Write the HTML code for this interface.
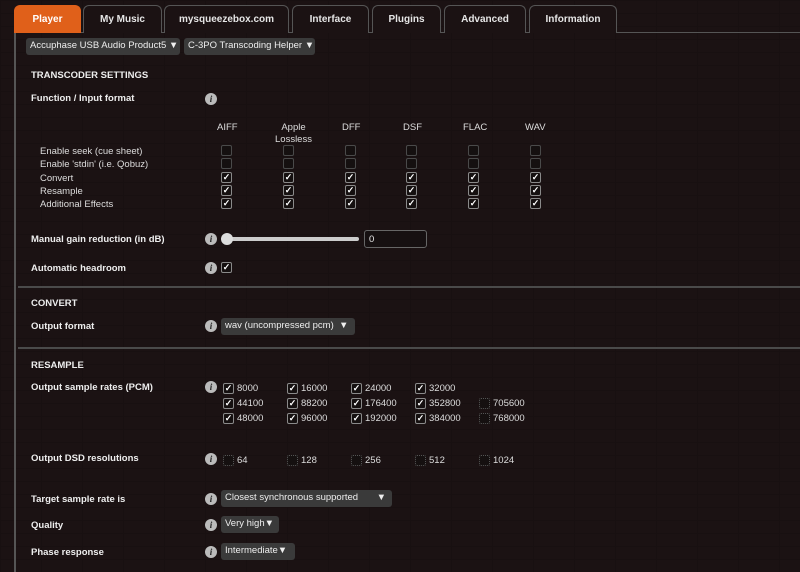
<!DOCTYPE html>
<html><head><meta charset="utf-8"><style>
*{margin:0;padding:0;box-sizing:border-box}
body{width:800px;height:572px;overflow:hidden;background:#1b1213;font-family:"Liberation Sans",sans-serif;color:#e8e8e8;position:relative;
background-image:linear-gradient(#181011 1px,transparent 1px),linear-gradient(90deg,#181011 1px,transparent 1px),linear-gradient(90deg,#181011 1px,transparent 1px);background-size:82px 13px,82px 26px,82px 26px;background-position:0 0,0 0,41px 13px;}
.a{position:absolute;white-space:nowrap}
.tab{position:absolute;top:5px;height:28px;border:1px solid #555;border-bottom:none;border-radius:6px 6px 0 0;background:#1b1213;font-weight:bold;font-size:10px;text-align:center;line-height:27px;color:#e6e6e6}
.b{font-weight:bold;font-size:9.5px;color:#eee}
.t{font-size:9.5px;color:#ddd}
.i{position:absolute;width:12px;height:12px;border-radius:50%;background:#bbb;color:#222;font:bold italic 9px "Liberation Serif",serif;text-align:center;line-height:12px}
.c{position:absolute;width:11px;height:11px;border:1px solid #8a8a8a;border-radius:2px;background:#151010;font-size:9px;line-height:9px;text-align:center;color:#fff;font-weight:bold}
.u{border-color:#4a4a4a}
.d{border:1px dotted #555}
.sel{position:absolute;height:17px;background:#3a3a3a;border-radius:3px;font-size:9.5px;line-height:16px;padding-left:4px;color:#eee}
.hr{position:absolute;left:18px;right:0;height:2px;background:#4a4a4a}
</style></head><body>
<div class="a" style="left:14px;top:32px;width:786px;height:1px;background:#555"></div>
<div class="a" style="left:14px;top:32px;width:2px;height:540px;background:#555"></div>
<div class="tab" style="left:14px;width:67px;background:#e0601a;border-color:#e0601a;color:#fff">Player</div>
<div class="tab" style="left:83px;width:79px">My Music</div>
<div class="tab" style="left:164px;width:125px">mysqueezebox.com</div>
<div class="tab" style="left:292px;width:77px">Interface</div>
<div class="tab" style="left:372px;width:69px">Plugins</div>
<div class="tab" style="left:444px;width:82px">Advanced</div>
<div class="tab" style="left:529px;width:88px">Information</div>

<div class="sel" style="left:26px;top:38px;width:154px">Accuphase USB Audio Product5 ▼</div>
<div class="sel" style="left:184px;top:38px;width:131px">C-3PO Transcoding Helper ▼</div>

<div class="a b" style="left:31px;top:70px">TRANSCODER SETTINGS</div>
<div class="a b" style="left:31px;top:93px">Function / Input format</div>
<div class="i" style="left:205px;top:93px">i</div>

<div class="a t" style="left:217px;top:122px">AIFF</div>
<div class="a t" style="left:275px;top:122px;text-align:center;line-height:12px">Apple<br>Lossless</div>
<div class="a t" style="left:342px;top:122px">DFF</div>
<div class="a t" style="left:403px;top:122px">DSF</div>
<div class="a t" style="left:463px;top:122px">FLAC</div>
<div class="a t" style="left:525px;top:122px">WAV</div>

<div class="a t" style="left:40px;top:145px;line-height:13.3px">Enable seek (cue sheet)<br>Enable 'stdin' (i.e. Qobuz)<br>Convert<br>Resample<br>Additional Effects</div>

<div class="c u" style="left:221px;top:145px"></div><div class="c u" style="left:283px;top:145px"></div><div class="c u" style="left:345px;top:145px"></div><div class="c u" style="left:406px;top:145px"></div><div class="c u" style="left:468px;top:145px"></div><div class="c u" style="left:530px;top:145px"></div>
<div class="c u" style="left:221px;top:158px"></div><div class="c u" style="left:283px;top:158px"></div><div class="c u" style="left:345px;top:158px"></div><div class="c u" style="left:406px;top:158px"></div><div class="c u" style="left:468px;top:158px"></div><div class="c u" style="left:530px;top:158px"></div>
<div class="c" style="left:221px;top:172px">✓</div><div class="c" style="left:283px;top:172px">✓</div><div class="c" style="left:345px;top:172px">✓</div><div class="c" style="left:406px;top:172px">✓</div><div class="c" style="left:468px;top:172px">✓</div><div class="c" style="left:530px;top:172px">✓</div>
<div class="c" style="left:221px;top:185px">✓</div><div class="c" style="left:283px;top:185px">✓</div><div class="c" style="left:345px;top:185px">✓</div><div class="c" style="left:406px;top:185px">✓</div><div class="c" style="left:468px;top:185px">✓</div><div class="c" style="left:530px;top:185px">✓</div>
<div class="c" style="left:221px;top:198px">✓</div><div class="c" style="left:283px;top:198px">✓</div><div class="c" style="left:345px;top:198px">✓</div><div class="c" style="left:406px;top:198px">✓</div><div class="c" style="left:468px;top:198px">✓</div><div class="c" style="left:530px;top:198px">✓</div>

<div class="a b" style="left:31px;top:234px">Manual gain reduction (in dB)</div>
<div class="i" style="left:205px;top:233px">i</div>
<div class="a" style="left:227px;top:237px;width:132px;height:4px;background:#ccc;border-radius:2px"></div>
<div class="a" style="left:221px;top:233px;width:12px;height:12px;border-radius:50%;background:#ddd"></div>
<div class="a" style="left:364px;top:230px;width:63px;height:18px;border:1px solid #666;border-radius:3px;background:#161011;font-size:9.5px;line-height:17px;padding-left:4px">0</div>

<div class="a b" style="left:31px;top:263px">Automatic headroom</div>
<div class="i" style="left:205px;top:262px">i</div>
<div class="c" style="left:221px;top:262px">✓</div>

<div class="hr" style="top:286px"></div>
<div class="a b" style="left:31px;top:298px">CONVERT</div>
<div class="a b" style="left:31px;top:321px">Output format</div>
<div class="i" style="left:205px;top:320px">i</div>
<div class="sel" style="left:221px;top:318px;width:134px">wav (uncompressed pcm) &nbsp;▼</div>

<div class="hr" style="top:347px"></div>
<div class="a b" style="left:31px;top:360px">RESAMPLE</div>
<div class="a b" style="left:31px;top:382px">Output sample rates (PCM)</div>
<div class="i" style="left:205px;top:381px">i</div>

<div class="c" style="left:223px;top:383px">✓</div><div class="a t" style="left:237px;top:383px">8000</div>
<div class="c" style="left:287px;top:383px">✓</div><div class="a t" style="left:301px;top:383px">16000</div>
<div class="c" style="left:351px;top:383px">✓</div><div class="a t" style="left:365px;top:383px">24000</div>
<div class="c" style="left:415px;top:383px">✓</div><div class="a t" style="left:429px;top:383px">32000</div>
<div class="c" style="left:223px;top:398px">✓</div><div class="a t" style="left:237px;top:398px">44100</div>
<div class="c" style="left:287px;top:398px">✓</div><div class="a t" style="left:301px;top:398px">88200</div>
<div class="c" style="left:351px;top:398px">✓</div><div class="a t" style="left:365px;top:398px">176400</div>
<div class="c" style="left:415px;top:398px">✓</div><div class="a t" style="left:429px;top:398px">352800</div>
<div class="c d" style="left:479px;top:398px"></div><div class="a t" style="left:493px;top:398px">705600</div>
<div class="c" style="left:223px;top:413px">✓</div><div class="a t" style="left:237px;top:413px">48000</div>
<div class="c" style="left:287px;top:413px">✓</div><div class="a t" style="left:301px;top:413px">96000</div>
<div class="c" style="left:351px;top:413px">✓</div><div class="a t" style="left:365px;top:413px">192000</div>
<div class="c" style="left:415px;top:413px">✓</div><div class="a t" style="left:429px;top:413px">384000</div>
<div class="c d" style="left:479px;top:413px"></div><div class="a t" style="left:493px;top:413px">768000</div>

<div class="a b" style="left:31px;top:453px">Output DSD resolutions</div>
<div class="i" style="left:205px;top:453px">i</div>
<div class="c d" style="left:223px;top:455px"></div><div class="a t" style="left:237px;top:455px">64</div>
<div class="c d" style="left:287px;top:455px"></div><div class="a t" style="left:301px;top:455px">128</div>
<div class="c d" style="left:351px;top:455px"></div><div class="a t" style="left:365px;top:455px">256</div>
<div class="c d" style="left:415px;top:455px"></div><div class="a t" style="left:429px;top:455px">512</div>
<div class="c d" style="left:479px;top:455px"></div><div class="a t" style="left:493px;top:455px">1024</div>

<div class="a b" style="left:31px;top:494px">Target sample rate is</div>
<div class="i" style="left:205px;top:493px">i</div>
<div class="sel" style="left:221px;top:490px;width:171px">Closest synchronous supported<span style="position:absolute;right:6px">▼</span></div>

<div class="a b" style="left:31px;top:520px">Quality</div>
<div class="i" style="left:205px;top:519px">i</div>
<div class="sel" style="left:221px;top:516px;width:58px">Very high▼</div>

<div class="a b" style="left:31px;top:547px">Phase response</div>
<div class="i" style="left:205px;top:546px">i</div>
<div class="sel" style="left:221px;top:543px;width:74px">Intermediate▼</div>
</body></html>
